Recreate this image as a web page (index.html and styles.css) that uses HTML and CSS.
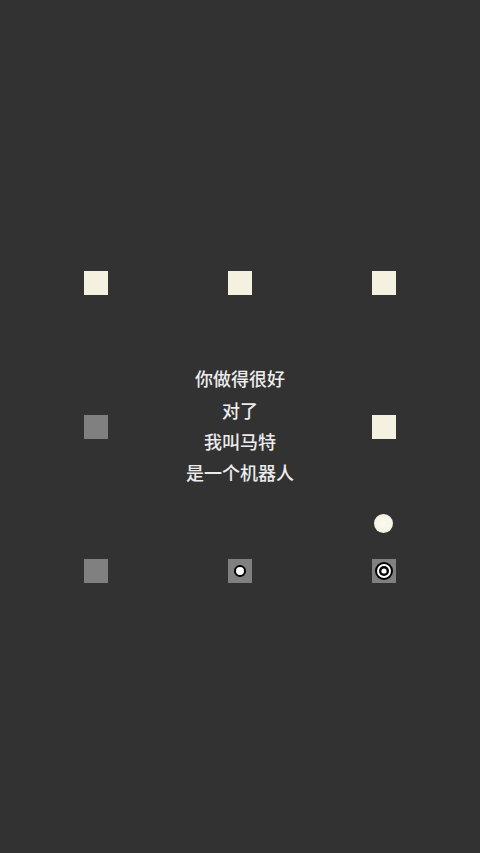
FILE: index.html
```html
<!DOCTYPE html>
<html lang="zh">
<head>
<meta charset="utf-8">
<title>puzzle</title>
<link rel="stylesheet" href="styles.css">
</head>
<body>
<main class="stage">
  <div class="board">
    <div class="tile light"></div>
    <div class="tile light"></div>
    <div class="tile light"></div>
    <div class="tile gray"></div>
    <div class="message">
      <p>你做得很好</p>
      <p>对了</p>
      <p>我叫马特</p>
      <p>是一个机器人</p>
    </div>
    <div class="tile light"></div>
    <div class="tile gray"></div>
    <div class="tile gray">
      <svg class="mark" width="24" height="24" viewBox="0 0 24 24">
        <circle cx="12" cy="12" r="5" fill="#fff" stroke="#000" stroke-width="2"/>
      </svg>
    </div>
    <div class="tile gray">
      <svg class="mark" width="24" height="24" viewBox="0 0 24 24">
        <circle cx="12" cy="12" r="9" fill="#000"/>
        <circle cx="12" cy="12" r="7" fill="#fff"/>
        <circle cx="12" cy="12" r="5" fill="#000"/>
        <circle cx="12" cy="12" r="2.6" fill="#fff"/>
      </svg>
    </div>
    <div class="ball"></div>
  </div>
</main>
</body>
</html>
```
FILE: styles.css
```css
html, body {
  margin: 0;
  padding: 0;
  background: #323232;
}
.stage {
  width: 480px;
  height: 853px;
  display: flex;
  align-items: center;
  justify-content: center;
}
.board {
  position: relative;
  display: grid;
  grid-template-columns: repeat(3, 24px);
  grid-template-rows: repeat(3, 24px);
  gap: 120px;
}
.tile {
  width: 24px;
  height: 24px;
}
.light {
  background: #f4f1e1;
}
.gray {
  background: #808080;
}
.mark {
  display: block;
}
.message {
  justify-self: center;
  align-self: center;
  width: max-content;
  font-family: "Noto Sans CJK SC", "Noto Sans", sans-serif;
  font-size: 18px;
  font-weight: 500;
  line-height: 31.3px;
  color: #ececec;
  text-align: center;
  margin-top: -1px;
}
.message p {
  margin: 0;
}
.ball {
  position: absolute;
  left: 290px;
  top: 243px;
  width: 19px;
  height: 19px;
  border-radius: 50%;
  background: radial-gradient(circle at 50% 50%, #fbfaf0 0%, #f6f3e3 70%, #dcd9c8 100%);
}
```
